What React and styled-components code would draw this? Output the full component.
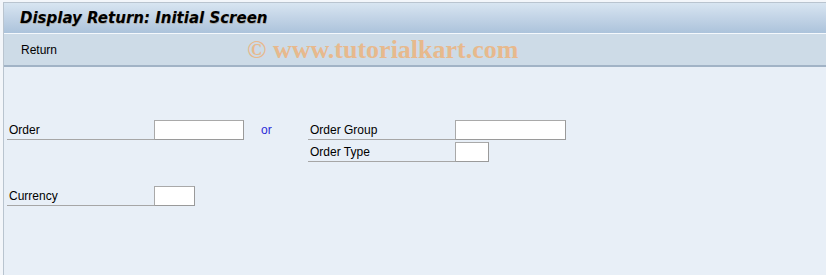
import { createGlobalStyle, styled } from "styled-components";

const GlobalStyle = createGlobalStyle`
    html, body {
        margin: 0;
        padding: 0;
        background: #f3f6fa;
    }
    body {
        padding-top: 2px;
        padding-left: 3px;
        font-family: "Liberation Sans", Arial, sans-serif;
        font-size: 12px;
        color: #000;
    }
`;

const rows = [
    { label: "Order", width: 90, row: 1 },
    { label: "Currency", width: 41, row: 4 },
];

const rightRows = [
    { label: "Order Group", width: 111, row: 1 },
    { label: "Order Type", width: 34, row: 2 },
];

const App = () => {
    return (
        <>
            <GlobalStyle />
            <Frame>
                <TitleBar>
                    <Title>Display Return: Initial Screen</Title>
                </TitleBar>
                <Toolbar>
                    <ToolButton>Return</ToolButton>
                    <Watermark>© www.tutorialkart.com</Watermark>
                </Toolbar>
                <Content>
                    <Form>
                        {rows.map((r) => (
                            <Field key={r.label} $row={r.row} $col={1}>
                                <Label>{r.label}</Label>
                                <Input style={{ width: r.width }} />
                            </Field>
                        ))}
                        <Or>or</Or>
                        {rightRows.map((r) => (
                            <Field key={r.label} $row={r.row} $col={4}>
                                <Label>{r.label}</Label>
                                <Input style={{ width: r.width }} />
                            </Field>
                        ))}
                    </Form>
                </Content>
            </Frame>
        </>
    );
};

export default App;

//styled
const Frame = styled.div`
    border-top: 1px solid #b9c4cf;
    border-left: 1px solid #b9c4cf;
    height: 272px;
    display: flex;
    flex-direction: column;
    background: #e8eff7;
`;

const TitleBar = styled.div`
    height: 30px;
    border-bottom: 1px solid #f4f8fc;
    background: linear-gradient(to bottom, #d8e5f1 0%, #c4d5e7 45%, #acc3db 100%);
    display: flex;
    align-items: center;
    padding-left: 16px;
`;

const Title = styled.h1`
    margin: 0;
    font-family: "DejaVu Sans", Verdana, sans-serif;
    font-size: 15px;
    font-weight: bold;
    font-style: italic;
    color: #000;
    text-shadow: 0.5px 0.5px 0 rgba(140, 90, 20, 0.35);
`;

const Toolbar = styled.div`
    position: relative;
    height: 31px;
    background: #cddbe7;
    border-bottom: 2px solid #a1b3c6;
    display: flex;
    align-items: center;
    padding-left: 17px;
`;

const ToolButton = styled.span`
    font-size: 12px;
    color: #000;
`;

const Watermark = styled.div`
    position: absolute;
    left: 243px;
    top: 1px;
    font-family: "Liberation Serif", "Times New Roman", serif;
    font-weight: bold;
    font-size: 26px;
    color: #e7b98d;
    white-space: nowrap;
`;

const Content = styled.div`
    flex: 1;
    padding: 53px 0 0 3px;
    background: #e8eff7;
`;

const Form = styled.div`
    display: grid;
    grid-template-columns: 254px 47px 260px;
    grid-auto-rows: 20px;
    row-gap: 2px;
`;

const Field = styled.div`
    grid-row: ${(p) => p.$row};
    grid-column: ${(p) => (p.$col === 1 ? 1 : 3)};
    display: flex;
    align-items: stretch;
`;

const Label = styled.div`
    width: 145px;
    padding-left: 2px;
    display: flex;
    align-items: center;
    border-bottom: 1px solid #a6a6a6;
    color: #000;
`;

const Input = styled.div`
    box-sizing: border-box;
    height: 20px;
    background: #fff;
    border: 1px solid #a9a9a9;
    border-right-color: #9a9a9a;
    border-bottom-color: #9a9a9a;
`;

const Or = styled.div`
    grid-row: 1;
    grid-column: 2;
    display: flex;
    align-items: center;
    color: #2a2ad8;
`;
